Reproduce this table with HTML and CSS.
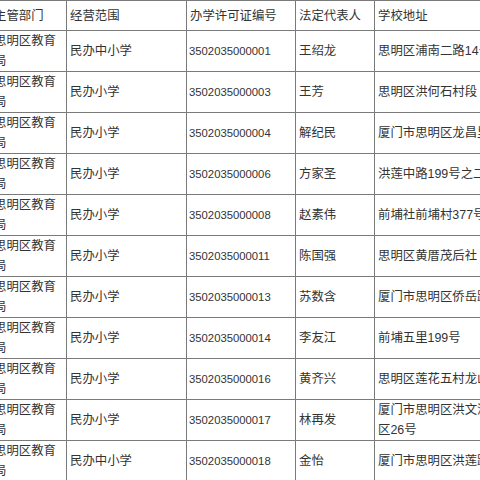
FILE: index.html
```html
<!DOCTYPE html>
<html lang="zh-CN">
<head>
<meta charset="utf-8">
<title>学校名单</title>
<link rel="stylesheet" href="styles.css">
</head>
<body>
<div class="viewport">
<table class="schools">
<colgroup>
<col class="c1"><col class="c2"><col class="c3"><col class="c4"><col class="c5">
</colgroup>
<thead>
<tr><th>主管部门</th><th>经营范围</th><th>办学许可证编号</th><th>法定代表人</th><th>学校地址</th></tr>
</thead>
<tbody>
<tr><td>思明区教育局</td><td>民办中小学</td><td class="num">3502035000001</td><td>王绍龙</td><td>思明区浦南二路14号</td></tr>
<tr><td>思明区教育局</td><td>民办小学</td><td class="num">3502035000003</td><td>王芳</td><td>思明区洪何石村段</td></tr>
<tr><td>思明区教育局</td><td>民办小学</td><td class="num">3502035000004</td><td>解纪民</td><td>厦门市思明区龙昌里</td></tr>
<tr><td>思明区教育局</td><td>民办小学</td><td class="num">3502035000006</td><td>方家圣</td><td>洪莲中路199号之二</td></tr>
<tr><td>思明区教育局</td><td>民办小学</td><td class="num">3502035000008</td><td>赵素伟</td><td>前埔社前埔村377号</td></tr>
<tr><td>思明区教育局</td><td>民办小学</td><td class="num">3502035000011</td><td>陈国强</td><td>思明区黄厝茂后社</td></tr>
<tr><td>思明区教育局</td><td>民办小学</td><td class="num">3502035000013</td><td>苏数含</td><td>厦门市思明区侨岳路</td></tr>
<tr><td>思明区教育局</td><td>民办小学</td><td class="num">3502035000014</td><td>李友江</td><td>前埔五里199号</td></tr>
<tr><td>思明区教育局</td><td>民办小学</td><td class="num">3502035000016</td><td>黄齐兴</td><td>思明区莲花五村龙山</td></tr>
<tr><td>思明区教育局</td><td>民办小学</td><td class="num">3502035000017</td><td>林再发</td><td>厦门市思明区洪文泥窟社区26号</td></tr>
<tr><td>思明区教育局</td><td>民办中小学</td><td class="num">3502035000018</td><td>金怡</td><td>厦门市思明区洪莲路</td></tr>
</tbody>
</table>
</div>
</body>
</html>
```

FILE: styles.css
```css
html, body {
  margin: 0;
  padding: 0;
  background: #ffffff;
}

.viewport {
  width: 480px;
  height: 480px;
  overflow: hidden;
}

.schools {
  margin-left: -10px;
  border-collapse: collapse;
  table-layout: fixed;
  width: 534px;
  font-family: "Liberation Sans", "Noto Sans CJK SC", sans-serif;
  font-size: 12.4px;
  color: #333333;
}

.c1 { width: 76px; }
.c2 { width: 120px; }
.c3 { width: 109px; }
.c4 { width: 79px; }
.c5 { width: 150px; }

.schools th,
.schools td {
  border: 1px solid #7a7a7a;
  padding: 0 3px;
  line-height: 20px;
  text-align: left;
  vertical-align: middle;
  font-weight: normal;
  overflow: hidden;
}

.schools th {
  height: 29px;
}

.schools td {
  height: 40px;
}

.schools td.num {
  font-size: 11.3px;
  padding-left: 2px;
}
```
